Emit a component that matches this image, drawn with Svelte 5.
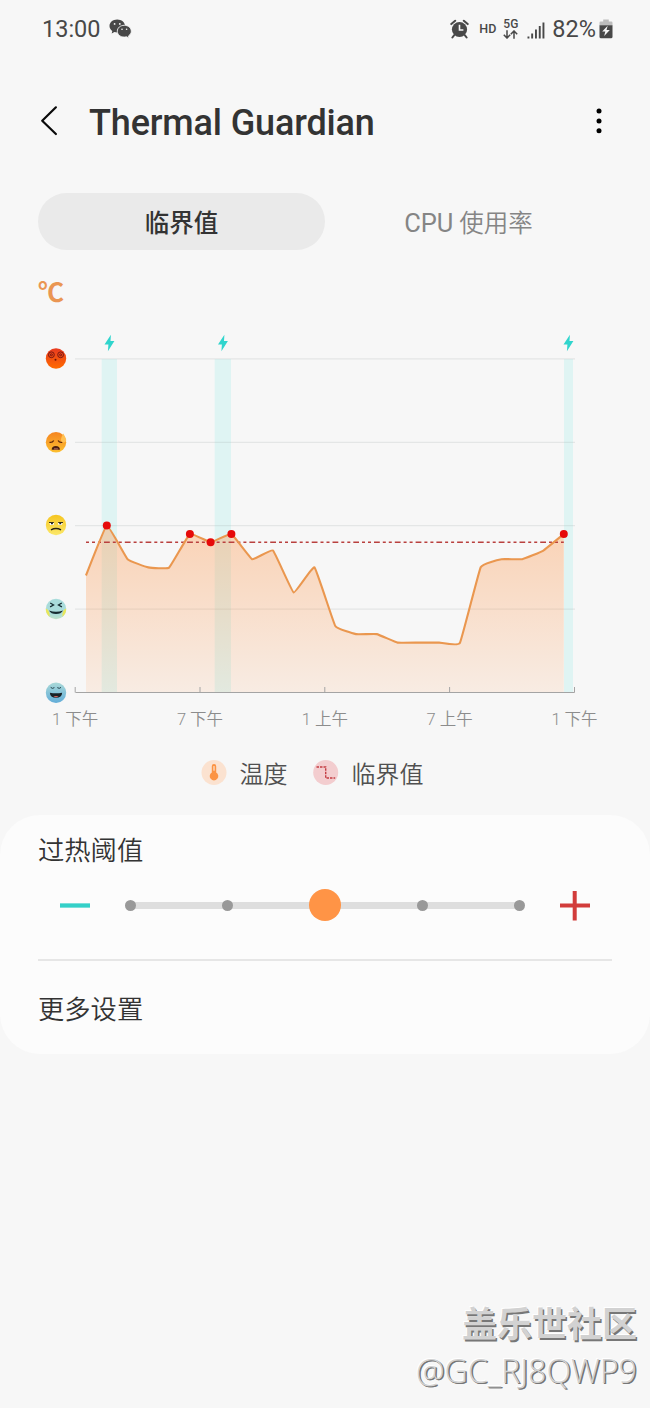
<script lang="ts">
  const gridLines = [358.8, 442.3, 525.6, 609.2];
  const baseline = 692.5;
  const limit = 542.3;

  const ticks = [
    { x: 75.2, label: '1 下午' },
    { x: 200, label: '7 下午' },
    { x: 324.8, label: '1 上午' },
    { x: 449.6, label: '7 上午' },
    { x: 574.5, label: '1 下午' }
  ];

  const charging = [
    { x: 101.7, width: 15.3, bolt: 109.5 },
    { x: 214.7, width: 16.3, bolt: 223 },
    { x: 564, width: 9, bolt: 568.5 }
  ];

  const points = [
    [86, 575.5], [106.8, 525.6], [127.6, 559.2], [148.3, 567.4], [169.1, 567.6],
    [189.9, 534], [210.6, 542.3], [231.4, 534], [252.2, 559.2], [273, 550.5],
    [293.7, 592.5], [314.5, 567.4], [335.3, 626], [356, 634.1], [376.8, 634.1],
    [397.6, 642.6], [418.4, 642.6], [439.1, 642.6], [459.9, 643], [480.7, 567.2],
    [501.5, 559.2], [522.2, 559.2], [543, 550.8], [563.8, 534]
  ];

  const hot = points.filter(([, y]) => y <= limit);

  // cubic curve with just a little smoothing at each reading
  function curve(pts: number[][], k = 0.045) {
    let d = `M${pts[0][0]} ${pts[0][1]}`;
    for (let i = 1; i < pts.length; i++) {
      const a = pts[Math.max(i - 2, 0)];
      const b = pts[i - 1];
      const c = pts[i];
      const e = pts[Math.min(i + 1, pts.length - 1)];
      d += ` C${b[0] + (c[0] - a[0]) * k} ${b[1] + (c[1] - a[1]) * k}`;
      d += ` ${c[0] - (e[0] - b[0]) * k} ${c[1] - (e[1] - b[1]) * k} ${c[0]} ${c[1]}`;
    }
    return d;
  }

  const line = curve(points);
  const area = `${line} L563.8 ${baseline} L86 ${baseline} Z`;

  // one subpath per reading, so the dashes restart each time
  const limitPath = points
    .slice(1)
    .map(([x], i) => `M${points[i][0]} ${limit} H${x}`)
    .join(' ');

  const steps = [0, 1, 2, 3, 4];
  let level = $state(2);
  let tab = $state(0);
</script>

<div class="screen">
  <div class="status">
    <span class="time">13:00</span>
    <svg class="wechat" width="23" height="20" viewBox="0 0 23 20">
      <path fill="#484848" d="M8.2 .5C3.900 .5 .5 3.300 .5 6.900c0 2 1.100 3.800 2.800 5L2.700 14.400l2.700-1.400c1 .3 1.900 .4 2.900 .4C12.500 13.400 16 10.500 16 6.900S12.500 .5 8.200 .5z" />
      <path fill="#484848" stroke="#f7f7f7" stroke-width=".9" d="M15.300 6.300c-4 0-7 2.600-7 5.900s3 5.900 7 5.900c.8 0 1.600-.1 2.300-.3l2.500 1.400-.6-2.300c1.700-1 2.800-2.800 2.800-4.700 0-3.300-3-5.900-7-5.900z" />
      <g fill="#f7f7f7">
        <circle cx="5.600" cy="4.900" r=".9" />
        <circle cx="10.800" cy="4.900" r=".9" />
        <circle cx="13" cy="10.300" r=".8" />
        <circle cx="17.600" cy="10.300" r=".8" />
      </g>
    </svg>
    <div class="indicators">
      <svg width="19" height="20" viewBox="0 0 19 20">
        <circle cx="9.500" cy="10.500" r="7.600" fill="#484848" />
        <path d="M9.500 5.700v5.300h3.900" fill="none" stroke="#f7f7f7" stroke-width="1.600" />
        <path d="M1.300 5.100l3.900-3.400M17.700 5.100l-3.900-3.400M4.200 16.200l-1.800 2.300M14.800 16.200l1.800 2.300" stroke="#484848" stroke-width="2" stroke-linecap="round" />
      </svg>
      <span class="hd">HD</span>
      <div class="network">
        <span>5G</span>
        <svg width="15" height="9" viewBox="0 0 15 9">
          <path d="M4 .3v7.500M.8 4.700L4 8l3.200-3.300M11 8.700V1.200M7.800 4.300L11 1l3.200 3.300" fill="none" stroke="#484848" stroke-width="1.500" />
        </svg>
      </div>
      <svg class="signal" width="18" height="17" viewBox="0 0 18 17" fill="#484848">
        <rect x=".5" y="14.500" width="1.900" height="2" />
        <rect x="4.200" y="11.500" width="1.900" height="5" />
        <rect x="8" y="7.500" width="1.900" height="9" />
        <rect x="11.800" y="4" width="1.900" height="12.500" />
        <rect x="15.500" y=".5" width="1.900" height="16" />
      </svg>
      <span class="percent">82%</span>
      <svg class="battery" width="14" height="20" viewBox="0 0 14 20">
        <path fill="#bdbdbd" d="M4.200 .5h5.600v2h2.500q1.200 0 1.200 1.200V6.500H.5V3.700q0-1.200 1.200-1.200h2.500z" />
        <path fill="#484848" d="M.5 6.300h13v11.500q0 1.500-1.500 1.500H2q-1.500 0-1.500-1.500z" />
        <path fill="#f7f7f7" d="M8.700 6.800L3.200 12.500h3.100l-1.100 4.600 5.600-6.200H7.500z" />
      </svg>
    </div>
  </div>

  <header>
    <svg class="back" width="18" height="32" viewBox="0 0 18 32">
      <path d="M15.900 2.300L2.200 15.800 15.900 29" fill="none" stroke="#0a0a0a" stroke-width="2.200" stroke-linecap="round" stroke-linejoin="round" />
    </svg>
    <h1>Thermal Guardian</h1>
    <svg class="more" width="6" height="26" viewBox="0 0 6 26">
      <circle cx="3" cy="3" r="2.500" />
      <circle cx="3" cy="12.900" r="2.500" />
      <circle cx="3" cy="22.800" r="2.500" />
    </svg>
  </header>

  <div class="tabs">
    <button class:active={tab === 0} onclick={() => (tab = 0)}>临界值</button>
    <button class:active={tab === 1} onclick={() => (tab = 1)}><span class="latin">CPU</span> 使用率</button>
  </div>

  <div class="unit">℃</div>

  <svg class="chart" width="650" height="420" viewBox="0 320 650 420">
    <defs>
      <linearGradient id="heat" x1="0" y1="0" x2="0" y2="1">
        <stop offset="0" stop-color="#ff9040" stop-opacity=".36" />
        <stop offset="1" stop-color="#ff9040" stop-opacity=".11" />
      </linearGradient>
      <linearGradient id="red" x1="0" y1="0" x2="0" y2="1">
        <stop offset="0" stop-color="#e93a20" />
        <stop offset="1" stop-color="#ff6a00" />
      </linearGradient>
      <linearGradient id="orange" x1="0" y1="0" x2="0" y2="1">
        <stop offset="0" stop-color="#f58420" />
        <stop offset="1" stop-color="#fcbf30" />
      </linearGradient>
      <linearGradient id="yellow" x1="0" y1="0" x2="0" y2="1">
        <stop offset="0" stop-color="#f6c51f" />
        <stop offset="1" stop-color="#fbe86a" />
      </linearGradient>
      <linearGradient id="blue" x1="0" y1="0" x2="0" y2="1">
        <stop offset="0" stop-color="#aad9d8" />
        <stop offset="1" stop-color="#62add8" />
      </linearGradient>
      <radialGradient id="mint" cx=".5" cy=".3" r=".75">
        <stop offset=".6" stop-color="#a9dcdb" />
        <stop offset="1" stop-color="#c2e3c4" />
      </radialGradient>
    </defs>

    {#each charging as c}
      <rect x={c.x} y="359" width={c.width} height="333" fill="#dff4f3" />
      <path transform="translate({c.bolt} 343)" d="M1.400 -8.300L-5 1.600h3.900L-1.600 8.200 4.900 -1.900H1z" fill="#30d5cd" />
    {/each}

    {#each gridLines as y}
      <line x1="75" y1={y} x2="575" y2={y} stroke="#9aa5a5" stroke-opacity=".2" stroke-width="1.300" />
    {/each}

    <path d={area} fill="url(#heat)" />
    <path d={limitPath} stroke="#b9403e" stroke-width="1.500" stroke-dasharray="3 3" />
    <path d={line} fill="none" stroke="#ea974f" stroke-width="2.100" stroke-linejoin="round" />

    <path d="M75.500 {baseline}H574.500" stroke="#a4a4a4" stroke-width="1.200" />
    {#each ticks as t}
      <line x1={t.x} y1="687" x2={t.x} y2={baseline} stroke="#a4a4a4" />
      <text class="tick" x={t.x} y="724.500">{t.label}</text>
    {/each}

    {#each hot as [x, y]}
      <circle cx={x} cy={y} r="4" fill="#e60a0a" />
    {/each}

    <!-- dizzy -->
    <g transform="translate(56 358.500)">
      <circle r="10.200" fill="url(#red)" />
      <g fill="none" stroke="#7a1712">
        <circle cx="-4.600" cy="-3.700" r="2.900" />
        <circle cx="-4.600" cy="-3.700" r="1" />
        <circle cx="4.600" cy="-3.700" r="2.900" />
        <circle cx="4.600" cy="-3.700" r="1" />
      </g>
      <circle cy="1.300" cx="-.5" r="1" fill="#6b1208" />
    </g>

    <!-- sweating -->
    <g transform="translate(56 442.200)">
      <circle r="10.200" fill="url(#orange)" />
      <path d="M-6.500 .2q3 .4 4.200-1.900M6.300 .2q-3 .4-4.200-1.900" fill="none" stroke="#5a260b" stroke-width="1.300" />
      <path d="M-4.300 7.600q0-3.700 4.100-3.700t4.100 3.700z" fill="#4b1e10" />
      <path d="M-2 6.700h3.900" stroke="#bc7770" />
      <path d="M7.200 -8.700q3.300 5.300 3 7.300-.7 2-3 1.800-2.500-.6-2.300-3 .4-2.500 2.300-6.100z" fill="#ffc052" />
    </g>

    <!-- unamused -->
    <g transform="translate(56 525)">
      <circle r="10.200" fill="url(#yellow)" />
      <path d="M-6.800 -2.200h5l-.7 2.200h-3.200zM6.800 -2.200h-5l.7 2.200h3.200z" fill="#fff" />
      <path d="M-7 -2.500h4.800M7 -2.500H2.200" stroke="#33301b" stroke-width="1.100" />
      <path d="M-5 -1.400h1.900M3.300 -1.400h1.900" stroke="#222" stroke-width="1.400" />
      <path d="M-5 4.900q5-2.800 10 0" fill="none" stroke="#292312" stroke-width="1.400" />
    </g>

    <!-- squinting -->
    <g transform="translate(56 609)">
      <circle r="10.200" fill="url(#mint)" />
      <path d="M-10.200 -.6Q-6 .5-6.500 7.700A10.200 10.200 0 0 1-10.200 -.6zM10.200 -.6Q6 .5 6.500 7.700A10.200 10.200 0 0 0 10.200 -.6z" fill="#e9e75a" />
      <path d="M-5.800 -5.900l3.400 1.900-3.500 1.900M5.800 -5.900L2.400 -4l3.500 1.900" fill="none" stroke="#172c31" stroke-width="1.200" />
      <path d="M-7 1.500Q0 4.100 7 1.500 5 5 0 5T-7 1.500z" fill="#172c31" />
    </g>

    <!-- cool -->
    <g transform="translate(56 692.700)">
      <circle r="10.200" fill="url(#blue)" />
      <path d="M-5.300 -5.300q1.700 1.800 3.700 .2M1.300 -5.100q2 1.600 3.700-.2" fill="none" stroke="#24434c" stroke-width="1" />
      <path d="M-6.100 0Q0 1.200 6.100 0 6 5 0 5T-6.100 0z" fill="#182126" />
      <path d="M-2.700 3.900q2.700-1.300 5.400 0-2.700 1.500-5.400 0z" fill="#e36661" />
    </g>
  </svg>

  <div class="legend">
    <div class="key">
      <svg width="26" height="26" viewBox="0 0 26 26">
        <circle cx="13" cy="12.500" r="12.500" fill="#fbe2d0" />
        <path d="M10.800 6.200a2.200 2.200 0 0 1 4.400 0v6.200a4.300 4.300 0 1 1-4.400 0z" fill="#fb9343" />
        <path d="M13 6.500v3.700" stroke="#fde3d0" stroke-width="1.200" stroke-linecap="round" />
      </svg>
      <span>温度</span>
    </div>
    <div class="key">
      <svg width="26" height="26" viewBox="0 0 26 26">
        <circle cx="12.700" cy="12.500" r="12.500" fill="#f3cdcf" />
        <path d="M3.500 7h9.200v11h9.500" fill="none" stroke="#c43d43" stroke-width="1.400" stroke-dasharray="2.500 1" />
      </svg>
      <span>临界值</span>
    </div>
  </div>

  <section class="card">
    <h2>过热阈值</h2>
    <div class="slider">
      <button class="step" aria-label="-" onclick={() => (level = Math.max(level - 1, 0))}>
        <svg width="30" height="30" viewBox="0 0 30 30"><path d="M0 14.500h30" stroke="#34d0c8" stroke-width="4.300" /></svg>
      </button>
      <div class="track">
        {#each steps as s}
          <span class="stop" class:selected={s === level}></span>
        {/each}
      </div>
      <button class="step" aria-label="+" onclick={() => (level = Math.min(level + 1, 4))}>
        <svg width="30" height="30" viewBox="0 0 30 30"><path d="M0 14.500h30M14.700 0v29.500" stroke="#d23c3b" stroke-width="4" /></svg>
      </button>
    </div>
    <h2 class="settings">更多设置</h2>
  </section>

  <div class="watermark">
    <strong>盖乐世社区</strong>
    <span>@GC_RJ8QWP9</span>
  </div>
</div>

<style>
  :global(body) {
    margin: 0;
    background: #f7f7f7;
  }

  .screen {
    position: relative;
    display: flex;
    flex-direction: column;
    width: 650px;
    height: 1408px;
    overflow: hidden;
    background: #f7f7f7;
    color: #333;
    font-family: Roboto, "Noto Sans CJK SC", sans-serif;
  }

  button {
    padding: 0;
    border: 0;
    background: none;
    font-family: inherit;
  }

  .status {
    display: flex;
    align-items: center;
    box-sizing: border-box;
    height: 58px;
    padding: 0 37px 0 42px;
    color: #484848;
  }

  .time,
  .percent {
    font-size: 23.5px;
    line-height: 28px;
  }

  .wechat {
    margin-left: 8px;
  }

  .indicators {
    display: flex;
    align-items: center;
    margin-left: auto;
  }

  .hd {
    margin: -1px 0 0 10px;
    font-size: 12.5px;
    font-weight: 500;
  }

  .network {
    display: flex;
    flex-direction: column;
    align-items: center;
    margin-left: 7px;
    font-size: 12px;
    font-weight: 500;
    line-height: 11px;
  }

  .signal {
    margin: 2px 7px 0 9px;
  }

  .battery {
    margin-left: 3px;
  }

  header {
    display: flex;
    align-items: center;
    height: 126px;
    padding: 0 48.5px 0 40px;
  }

  h1 {
    margin: 3px 0 0 31px;
    font-size: 36px;
    font-weight: 500;
    letter-spacing: -0.15px;
    line-height: 42px;
  }

  .more {
    margin-left: auto;
  }

  .tabs {
    display: flex;
    margin: 9px 38px 0;
  }

  .tabs button {
    flex: 1;
    height: 57px;
    border-radius: 29px;
    color: #858585;
    font-size: 24.5px;
    font-weight: 350;
  }

  .tabs button.active {
    background: #eaeaea;
    color: #333;
    font-weight: 500;
  }

  .latin {
    font-size: 25.5px;
    font-weight: 400;
  }

  .unit {
    height: 70px;
    padding-left: 38px;
    color: #ea9653;
    font-size: 26px;
    font-weight: 700;
    line-height: 86px;
  }

  .chart {
    display: block;
    flex: none;
  }

  .tick {
    fill: #8c8c8c;
    font-size: 16.5px;
    font-weight: 350;
    text-anchor: middle;
  }

  .legend {
    display: flex;
    justify-content: center;
    gap: 25px;
    height: 75px;
    padding-right: 26px;
  }

  .key {
    display: flex;
    align-items: center;
    gap: 13px;
    height: 65px;
    color: #505050;
    font-size: 24px;
    font-weight: 350;
  }

  .card {
    box-sizing: border-box;
    height: 239px;
    padding: 18px 38px 0;
    border-radius: 40px;
    background: #fcfcfc;
  }

  h2 {
    margin: 0;
    font-size: 26.3px;
    font-weight: 350;
    line-height: 36px;
  }

  .slider {
    display: flex;
    align-items: center;
    justify-content: space-between;
    height: 90px;
    padding: 0 22px;
    border-bottom: 2px solid #e6e6e6;
  }

  .step {
    width: 30px;
    height: 30px;
    margin-bottom: 17px;
  }

  .step svg {
    display: block;
  }

  .track {
    display: flex;
    align-items: center;
    justify-content: space-between;
    width: 400px;
    height: 32px;
    margin-bottom: 18px;
    background: linear-gradient(#dedede, #dedede) center / 388px 7px no-repeat;
  }

  .stop {
    width: 11px;
    height: 11px;
    border-radius: 50%;
    background: #999;
  }

  .stop.selected {
    width: 32px;
    height: 32px;
    margin: 0 -10.5px;
    background: #ff9446;
  }

  .settings {
    margin-top: 31px;
  }

  .watermark {
    position: absolute;
    right: 13px;
    bottom: 15px;
    display: flex;
    flex-direction: column;
    align-items: flex-end;
    color: #d2d2d2;
    text-shadow: 1.5px 1.5px 0 #777, -1px -1px 0 #fff;
  }

  .watermark strong {
    font-size: 35px;
    line-height: 46px;
  }

  .watermark span {
    font-family: "Open Sans", "Noto Sans", sans-serif;
    font-size: 32.2px;
    font-weight: 300;
    line-height: 44px;
    text-shadow: 1px 1px 0 #777, 1.5px 1px 0 #777, -1px -1px 0 #fff;
  }
</style>
